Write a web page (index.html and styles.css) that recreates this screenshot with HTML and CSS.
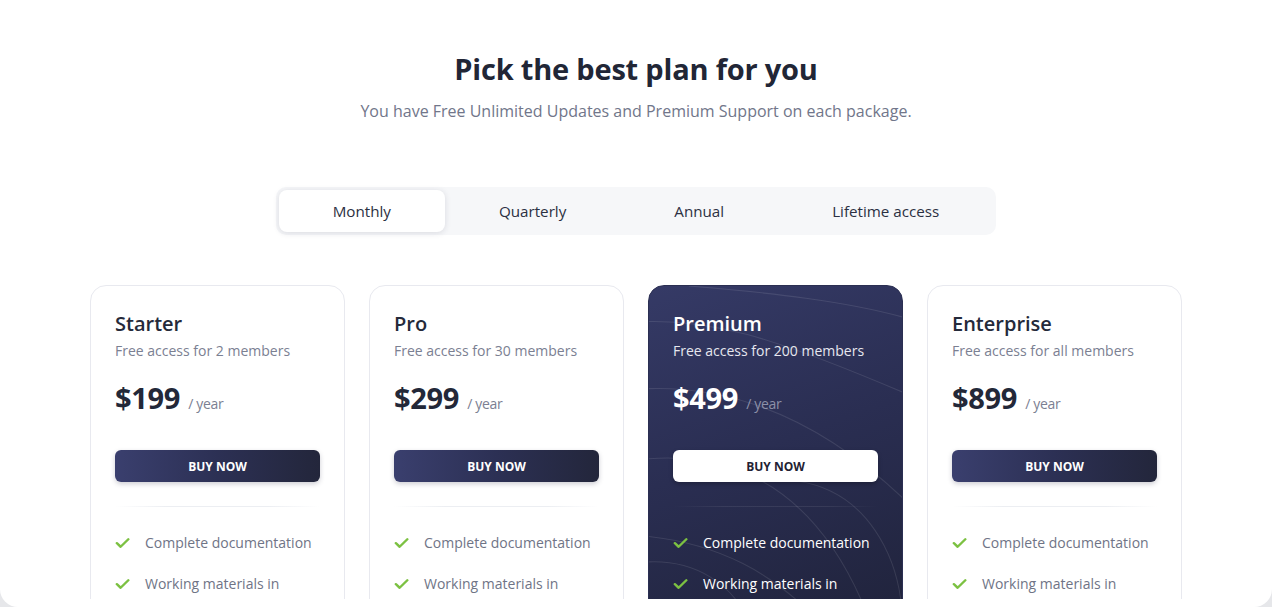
FILE: index.html
```html
<!DOCTYPE html>
<html lang="en">
<head>
<meta charset="utf-8">
<title>Pricing</title>
<link rel="stylesheet" href="styles.css">
</head>
<body>
<div class="frame">
  <main class="page">
    <header class="intro">
      <h1 class="title">Pick the best plan for you</h1>
      <p class="lead">You have Free Unlimited Updates and Premium Support on each package.</p>
    </header>

    <nav class="tabs">
      <button class="tab tab-active">Monthly</button>
      <button class="tab">Quarterly</button>
      <button class="tab">Annual</button>
      <button class="tab">Lifetime access</button>
    </nav>

    <section class="plans">
      <article class="plan">
        <h2 class="plan-name">Starter</h2>
        <p class="plan-desc">Free access for 2 members</p>
        <p class="price"><span class="amount">$199</span><span class="period">/ year</span></p>
        <button class="buy">BUY NOW</button>
        <hr class="sep">
        <ul class="features">
          <li class="feature"><svg class="check" viewBox="0 0 16 12"><path d="M2 6.2 L6 10 L14.2 2"/></svg>Complete documentation</li>
          <li class="feature"><svg class="check" viewBox="0 0 16 12"><path d="M2 6.2 L6 10 L14.2 2"/></svg>Working materials in</li>
        </ul>
      </article>

      <article class="plan">
        <h2 class="plan-name">Pro</h2>
        <p class="plan-desc">Free access for 30 members</p>
        <p class="price"><span class="amount">$299</span><span class="period">/ year</span></p>
        <button class="buy">BUY NOW</button>
        <hr class="sep">
        <ul class="features">
          <li class="feature"><svg class="check" viewBox="0 0 16 12"><path d="M2 6.2 L6 10 L14.2 2"/></svg>Complete documentation</li>
          <li class="feature"><svg class="check" viewBox="0 0 16 12"><path d="M2 6.2 L6 10 L14.2 2"/></svg>Working materials in</li>
        </ul>
      </article>

      <article class="plan plan-featured">
        <svg class="waves" viewBox="0 0 254 330" preserveAspectRatio="none">
          <path d="M40 0 C 120 6, 200 14, 260 30"/>
          <path d="M-10 33 C 60 30, 120 45, 260 100"/>
          <path d="M-10 95 C 80 90, 170 120, 260 200"/>
          <path d="M-10 160 C 90 150, 180 190, 230 330"/>
          <path d="M-10 230 C 60 235, 130 260, 190 330"/>
          <path d="M-10 300 C 40 290, 90 300, 130 330"/>
          <path d="M150 180 C 220 190, 250 250, 254 300"/>
          <path d="M-10 255 C 40 250, 90 270, 110 330"/>
        </svg>
        <h2 class="plan-name">Premium</h2>
        <p class="plan-desc">Free access for 200 members</p>
        <p class="price"><span class="amount">$499</span><span class="period">/ year</span></p>
        <button class="buy">BUY NOW</button>
        <hr class="sep">
        <ul class="features">
          <li class="feature"><svg class="check" viewBox="0 0 16 12"><path d="M2 6.2 L6 10 L14.2 2"/></svg>Complete documentation</li>
          <li class="feature"><svg class="check" viewBox="0 0 16 12"><path d="M2 6.2 L6 10 L14.2 2"/></svg>Working materials in</li>
        </ul>
      </article>

      <article class="plan">
        <h2 class="plan-name">Enterprise</h2>
        <p class="plan-desc">Free access for all members</p>
        <p class="price"><span class="amount">$899</span><span class="period">/ year</span></p>
        <button class="buy">BUY NOW</button>
        <hr class="sep">
        <ul class="features">
          <li class="feature"><svg class="check" viewBox="0 0 16 12"><path d="M2 6.2 L6 10 L14.2 2"/></svg>Complete documentation</li>
          <li class="feature"><svg class="check" viewBox="0 0 16 12"><path d="M2 6.2 L6 10 L14.2 2"/></svg>Working materials in</li>
        </ul>
      </article>
    </section>
  </main>
</div>
</body>
</html>
```

FILE: styles.css
```css
* { box-sizing: border-box; }

html, body {
  margin: 0;
  padding: 0;
  height: 100%;
}

body {
  background: #e6e7ea;
  font-family: "Open Sans", "Noto Sans", sans-serif;
  color: #252a3a;
  overflow: hidden;
}

.frame {
  height: 607px;
  background: #ffffff;
  border-radius: 0 0 18px 18px;
  overflow: hidden;
}

.page {
  height: 599px;
  overflow: hidden;
  display: flex;
  flex-direction: column;
  align-items: center;
  padding-top: 48px;
}

.intro {
  text-align: center;
}

.title {
  margin: 0;
  font-size: 29px;
  line-height: 42px;
  font-weight: 700;
  color: #212636;
  letter-spacing: -0.2px;
}

.lead {
  margin: 9px 0 0;
  font-size: 16px;
  line-height: 24px;
  color: #71768a;
}

.tabs {
  margin-top: 64px;
  display: flex;
  padding: 3px;
  background: #f6f7f9;
  border-radius: 10px;
}

.tab {
  font-family: inherit;
  font-size: 15.2px;
  line-height: 22px;
  color: #2b3042;
  background: transparent;
  border: 0;
  padding: 10px 54px;
  border-radius: 8px;
}

.tab-active {
  background: #ffffff;
  box-shadow: 0 1px 6px rgba(40, 45, 70, 0.14);
}

.plans {
  margin-top: 50px;
  display: grid;
  grid-template-columns: repeat(4, 255px);
  gap: 24px;
}

.plan {
  position: relative;
  height: 360px;
  border: 1px solid #e8e9ef;
  border-radius: 16px;
  padding: 24px 24px 0;
  background: #ffffff;
  overflow: hidden;
}

.plan-name {
  margin: 0;
  font-size: 20px;
  line-height: 28px;
  font-weight: 600;
  color: #252a3a;
}

.plan-desc {
  margin: 2px 0 0;
  font-size: 14px;
  line-height: 22px;
  color: #7b8092;
}

.price {
  margin: 16px 0 0;
  display: flex;
  align-items: baseline;
  gap: 8px;
}

.amount {
  font-size: 29px;
  line-height: 40px;
  font-weight: 700;
  color: #232838;
  letter-spacing: -0.3px;
}

.period {
  font-size: 14px;
  color: #7b8092;
  letter-spacing: -0.3px;
}

.buy {
  display: block;
  width: 100%;
  height: 32px;
  margin-top: 32px;
  border: 0;
  border-radius: 6px;
  background: linear-gradient(90deg, #3a3f6e 0%, #2c3054 50%, #23263b 100%);
  color: #ffffff;
  font-family: inherit;
  font-size: 12px;
  font-weight: 700;
  box-shadow: 0 2px 5px rgba(30, 34, 60, 0.22);
}

.sep {
  margin: 24px 0 0;
  border: 0;
  height: 1px;
  background: linear-gradient(90deg, rgba(232, 233, 239, 0) 0%, #eceef2 25%, #eceef2 75%, rgba(232, 233, 239, 0) 100%);
}

.features {
  list-style: none;
  margin: 25px 0 0;
  padding: 0;
  display: flex;
  flex-direction: column;
  gap: 19px;
}

.feature {
  display: flex;
  align-items: center;
  gap: 15px;
  font-size: 14px;
  line-height: 22px;
  color: #6f7486;
}

.check {
  width: 15px;
  height: 12px;
  flex: none;
  fill: none;
  stroke: #7cc142;
  stroke-width: 2.6;
  stroke-linecap: round;
  stroke-linejoin: round;
}

/* Featured card */
.plan-featured {
  border-color: #2b2f52;
  background: linear-gradient(160deg, #353a66 0%, #2a2e52 45%, #1f2239 100%);
}

.plan-featured > *:not(.waves) {
  position: relative;
}

.waves {
  position: absolute;
  inset: 0;
  width: 100%;
  height: 100%;
  fill: none;
  stroke: rgba(255, 255, 255, 0.1);
  stroke-width: 1;
}

.plan-featured .plan-name,
.plan-featured .amount {
  color: #ffffff;
}

.plan-featured .plan-desc {
  color: #e6e7ef;
}

.plan-featured .period {
  color: #8c90a8;
}

.plan-featured .buy {
  background: #ffffff;
  color: #1f2233;
  box-shadow: 0 2px 4px rgba(0, 0, 0, 0.25);
}

.plan-featured .sep {
  background: linear-gradient(90deg, rgba(255, 255, 255, 0) 0%, rgba(255, 255, 255, 0.08) 25%, rgba(255, 255, 255, 0.08) 75%, rgba(255, 255, 255, 0) 100%);
}

.plan-featured .feature {
  color: #ffffff;
}
```
